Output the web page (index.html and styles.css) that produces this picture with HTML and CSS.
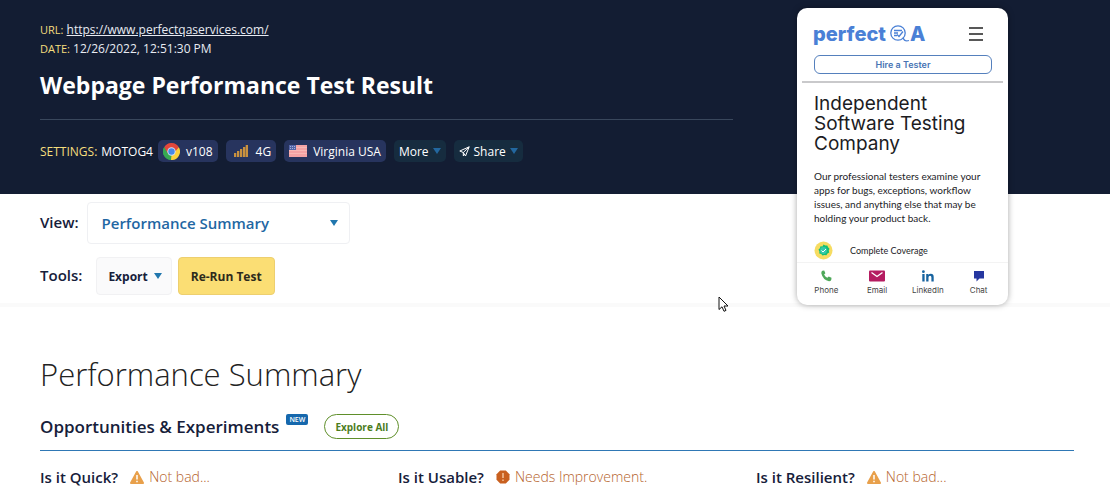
FILE: index.html
```html
<!DOCTYPE html>
<html lang="en">
<head>
<meta charset="utf-8">
<title>Webpage Performance Test Result</title>
<link rel="stylesheet" href="styles.css">
</head>
<body>
<header class="hero">
  <div class="hero-main">
    <p class="meta"><span class="label">URL:</span> <a href="#">https://www.perfectqaservices.com/</a></p>
    <p class="meta"><span class="label">DATE:</span> 12/26/2022, 12:51:30 PM</p>
    <h1>Webpage Performance Test Result</h1>
    <div class="settings">
      <span class="device"><span class="label">SETTINGS:</span> MOTOG4</span>
      <span class="chip"><svg width="17" height="17" viewBox="0 0 18 18" aria-hidden="true"><path d="M9 9L1.2 4.5A9 9 0 0 1 16.8 4.5Z" fill="#e2473c"/><path d="M9 9L1.2 4.5A9 9 0 0 0 9 18Z" fill="#36a852"/><path d="M9 9L16.8 4.5A9 9 0 0 1 8.5 18Z" fill="#fbd03a"/><path d="M9 4.5H16.8L13 9ZM5 11L1.2 4.5L7 6Z" fill="#e2473c"/><path d="M1.2 4.5L5.1 11.2L9 13L7.6 17.9A9 9 0 0 1 1.2 4.5Z" fill="#36a852"/><circle cx="9" cy="9" r="4.4" fill="#d5e3f5"/><circle cx="9" cy="9" r="3.4" fill="#4688e8"/></svg>v108</span>
      <span class="chip signal"><svg width="14" height="12" viewBox="0 0 14 12" fill="#c9913f" aria-hidden="true"><path d="M0 8h2.300v4H0zM3 6h2.300v6H3zM6 4h2.300v8H6zM9 2h2.300v10H9zM11.700 0H14v12h-2.300z"/></svg>4G</span>
      <span class="chip"><svg width="18" height="12" viewBox="0 0 18 12" aria-hidden="true"><path fill="#f4a3a5" d="M0 0h18v12H0z"/><path fill="#f8b8b5" d="M0 2h18v1H0zM0 5h18v1H0zM0 8h18v1H0z"/><path fill="#5465a8" d="M0 0h7v5H0z"/><path stroke="#a6b2da" stroke-dasharray="1 1" d="M1 1.5h5M1 3.5h5"/></svg>Virginia USA</span>
      <button class="menu" type="button">More <i class="caret"></i></button>
      <button class="menu" type="button"><svg width="11" height="11" viewBox="0 0 11 11" fill="none" stroke="#fff" stroke-linejoin="round" aria-hidden="true"><path d="M10.2.8L.8 5l3.500 1.500L6.500 10ZM4.300 6.500L10.200.8M4.300 6.500v3.300l1.300-1.600"/></svg>Share <i class="caret"></i></button>
    </div>
  </div>

  <aside class="phone">
    <div class="phone-top">
      <div class="brand">perfect <svg width="20" height="18" viewBox="0 0 20 18" fill="none" stroke="#4a80d6" stroke-width="1.3" aria-hidden="true"><circle cx="8" cy="8" r="7.2"/><path d="M4 5.5h8M4 8h4M4 10.500h3M7 9.500l2 2 4-5M13 12.500c1 3 3 4 6 3"/></svg><span>A</span></div>
      <button class="burger" type="button" aria-label="Menu"><svg width="14" height="14" viewBox="0 0 14 14" stroke="#222" stroke-width="1.4"><path d="M0 1h14M0 7h14M0 13h14"/></svg></button>
    </div>
    <button class="hire" type="button">Hire a Tester</button>
    <div class="phone-body">
      <h2>Independent Software Testing Company</h2>
      <p>Our professional testers examine your apps for bugs, exceptions, workflow issues, and anything else that may be holding your product back.</p>
      <div class="coverage"><svg width="19" height="19" viewBox="0 0 19 19" aria-hidden="true"><circle cx="9.500" cy="9.500" r="9" fill="#f6dc62"/><path d="M9.500 3.500l1.800 1 2-.1.800 1.900 1.400 1.400-.7 1.900.4 2-1.700 1-1.100 1.600-2-.3-1.900.7-1.300-1.500-1.900-.7.1-2-.9-1.800 1.400-1.400.6-1.900 2 .1z" fill="#12bf78"/><circle cx="9.500" cy="9.500" r="3.400" fill="#36c9aa"/><path d="M7.500 9.500l1.500 1.500 3-3" fill="none" stroke="#fff"/></svg>Complete Coverage</div>
    </div>
    <nav class="phone-nav">
      <a href="#"><svg width="12" height="12" viewBox="0 0 12 12" aria-hidden="true"><path d="M2.300.7L4.200.5l1.200 2.800-1.300 1.300q1 2.200 3.200 3.100l1.400-1.200 2.800 1.300-.2 1.900q-.5 1.500-2.300 1.500Q3 10.300 1.300 3.300q-.1-1.900 1-2.600z" fill="#4fa85a"/></svg>Phone</a>
      <a href="#"><svg width="16" height="12" viewBox="0 0 16 12" aria-hidden="true"><rect y=".5" width="16" height="11" rx="1" fill="#b51c61"/><path d="M2.500 2.500L8 6.500l5.500-4" fill="none" stroke="#fff" stroke-width="1.300"/></svg>Email</a>
      <a href="#"><svg width="12" height="12" viewBox="0 0 12 12" fill="#17639f" aria-hidden="true"><circle cx="1.400" cy="1.700" r="1.400"/><path d="M.3 4h2.300v7.500H.3zM4.200 4h2.200v1q.7-1.200 2.400-1.200 2.900 0 2.900 3.300v4.400H9.400v-4q0-1.700-1.300-1.700-1.600 0-1.600 1.800v3.900H4.200z"/></svg>LinkedIn</a>
      <a href="#"><svg width="12" height="12" viewBox="0 0 12 12" aria-hidden="true"><path d="M1 1h10v7.500H6.500L3.500 11.500v-3H1z" fill="#2637a0"/></svg>Chat</a>
    </nav>
  </aside>
</header>

<section class="toolbar">
  <div class="row">
    <label for="view">View:</label>
    <span class="select-box"><select id="view"><option>Performance Summary</option></select><i class="caret"></i></span>
  </div>
  <div class="row tools">
    <span class="tools-label">Tools:</span>
    <button class="export" type="button">Export <i class="caret"></i></button>
    <button class="rerun" type="button">Re-Run Test</button>
  </div>
</section>

<main class="summary">
  <h2 class="title">Performance Summary</h2>
  <div class="opps">
    <h3>Opportunities &amp; Experiments</h3>
    <span class="new">NEW</span>
    <button class="explore" type="button">Explore All</button>
  </div>
  <div class="cards">
    <div class="card"><h4>Is it Quick?</h4><svg width="14" height="13" viewBox="0 0 14 13" aria-hidden="true"><path d="M7 1l6 11H1z" fill="#e8a04b" stroke="#e8a04b" stroke-width="2" stroke-linejoin="round"/><path d="M7 4v4.500M7 9.800v1.500" stroke="#fff" stroke-width="1.500"/></svg><span>Not bad...</span></div>
    <div class="card"><h4>Is it Usable?</h4><svg width="14" height="14" viewBox="0 0 14 14" aria-hidden="true"><path d="M4.200.5h5.600l3.700 3.700v5.600l-3.700 3.700H4.200L.5 9.800V4.200z" fill="#c9601f"/><path d="M7 3v5M7 9.500V11" stroke="#f3c49c" stroke-width="1.500"/></svg><span>Needs Improvement.</span></div>
    <div class="card"><h4>Is it Resilient?</h4><svg width="14" height="13" viewBox="0 0 14 13" aria-hidden="true"><path d="M7 1l6 11H1z" fill="#e8a04b" stroke="#e8a04b" stroke-width="2" stroke-linejoin="round"/><path d="M7 4v4.500M7 9.800v1.500" stroke="#fff" stroke-width="1.500"/></svg><span>Not bad...</span></div>
  </div>
</main>
<svg class="cursor" width="11" height="17" viewBox="0 0 11 17" aria-hidden="true"><path d="M1 1v12.500l3-2.700 2 4.500 2-.9-2-4.400h4z" fill="#fff" stroke="#111" stroke-linejoin="round"/></svg>
</body>
</html>
```
FILE: styles.css
```css
* { box-sizing: border-box; }

body {
  margin: 0;
  background: #fff;
  color: #16203a;
  font-family: "Open Sans", sans-serif;
  font-size: 12px;
  overflow: hidden;
}

h1, h2, h3, h4, p { margin: 0; }
button, select { font-family: inherit; cursor: pointer; }
svg { flex: none; }

.caret {
  border: 4px solid transparent;
  border-top: 6px solid #2177ae;
  border-bottom: 0;
}

.hero {
  position: relative;
  padding: 20px 40px 32px;
  background: #131d33;
  color: #fff;
}
.hero-main { margin-right: 337px; }
.meta { line-height: 19px; color: #e8ebf2; }
.meta a { color: #e8ebf2; }
.label { color: #f5de7d; font-size: 11px; }
.hero h1 {
  padding: 10px 0 17px;
  border-bottom: 1px solid #39475c;
  font-size: 23px;
  line-height: 34px;
}
.settings {
  display: flex;
  align-items: center;
  gap: 8px;
  margin-top: 20px;
}
.device {
  display: flex;
  align-items: center;
  gap: 4px;
  margin-right: -3px;
}
.device .label { font-size: 12px; }
.chip, .menu {
  display: flex;
  align-items: center;
  gap: 6px;
  height: 22px;
  padding: 0 5px;
  border: 0;
  border-radius: 5px;
  background: #27345e;
  color: #fff;
  font-size: 12px;
}
.signal {
  gap: 8px;
  padding-left: 8px;
}
.menu {
  gap: 4px;
  background: #162c3f;
}
.menu .caret { border-top-color: #23679f; }

.phone {
  position: absolute;
  top: 8px;
  right: 102px;
  width: 211px;
  padding-top: 14px;
  border-radius: 10px;
  background: #fff;
  box-shadow: 0 0 6px rgba(0, 0, 0, .35);
  color: #1c1c1f;
}
.phone-top {
  display: flex;
  align-items: center;
  justify-content: space-between;
  height: 24px;
  padding: 0 25px 0 16px;
}
.brand {
  display: flex;
  align-items: center;
  color: #4a80d6;
  font: 800 20px/24px Inter, sans-serif;
}
.brand svg { margin-left: 4px; }
.burger {
  display: flex;
  padding: 0;
  border: 0;
  background: none;
}
.hire {
  display: block;
  width: 178px;
  height: 19px;
  margin: 9px 17px 7px;
  padding: 0;
  border: 1px solid #5580bd;
  border-radius: 6px;
  background: #fff;
  color: #4874b4;
  font: 600 9px Inter, sans-serif;
}
.phone-body {
  margin: 0 5px;
  padding: 11px 12px 2px;
  border-top: 2px solid #c9c9cb;
}
.phone h2 { font: 400 19px/20px Inter, sans-serif; }
.phone-body p {
  margin-top: 15px;
  font: 400 10px/14px Lato, sans-serif;
}
.coverage {
  display: flex;
  align-items: center;
  gap: 17px;
  margin-top: 16px;
  font: 400 9px Lato, sans-serif;
}
.phone-nav {
  display: grid;
  grid-template-columns: repeat(4, 1fr);
  padding: 7px 4px 9px;
  border-top: 1px solid #f3f3f3;
}
.phone-nav a {
  display: flex;
  flex-direction: column;
  align-items: center;
  gap: 2px;
  color: #444;
  font: 400 8px/12px Inter, sans-serif;
  text-decoration: none;
}

.toolbar {
  padding: 8px 40px;
  border-bottom: 4px solid #fafafa;
}
.row {
  display: flex;
  align-items: center;
  gap: 8px;
}
.row label, .tools-label {
  padding-bottom: 2px;
  font-size: 15px;
  font-weight: 600;
}
.select-box {
  display: grid;
  grid-template-columns: 1fr auto;
  align-items: center;
  width: 263px;
}
.select-box select {
  grid-area: 1 / 1 / 2 / 3;
  height: 42px;
  padding: 0 14px;
  border: 1px solid #eff0f3;
  border-radius: 4px;
  background: #fff;
  appearance: none;
  color: #1f67a3;
  font-size: 15px;
  font-weight: 600;
}
.select-box .caret {
  grid-area: 1 / 2;
  margin-right: 12px;
  pointer-events: none;
}
.tools { margin-top: 13px; gap: 6px; }
.tools-label { margin-right: 8px; }
.export, .rerun {
  display: flex;
  align-items: center;
  gap: 6px;
  height: 38px;
  padding: 0 12px;
  border: 1px solid #f1f1f3;
  border-radius: 4px;
  background: #fafafb;
  color: #16203a;
  font-size: 12px;
  font-weight: 700;
}
.export { padding: 0 9px 0 11px; }
.rerun {
  border-color: #edcf6f;
  background: #fbde74;
  color: #2e2a1c;
}

.summary { padding: 43px 36px 12px 40px; }
.title {
  color: #222;
  font-size: 31px;
  font-weight: 300;
  line-height: 48px;
}
.opps {
  display: flex;
  align-items: center;
  padding: 16px 0 11px;
  border-bottom: 1px solid #2f78b5;
}
.opps h3 { font-size: 17px; font-weight: 600; line-height: 24px; }
.new {
  align-self: flex-start;
  margin-left: 7px;
  padding: 0 3px;
  border-radius: 2px;
  background: #1668ad;
  color: #fff;
  font-size: 7px;
  font-weight: 600;
  line-height: 11px;
}
.explore {
  height: 25px;
  margin-left: 16px;
  padding: 0 10px;
  border: 1px solid #5f8f2a;
  border-radius: 13px;
  background: #fff;
  color: #4c7d1e;
  font-size: 10px;
  font-weight: 700;
}
.cards {
  display: grid;
  grid-template-columns: repeat(3, 1fr);
  gap: 40px;
  margin-top: 15px;
}
.card {
  display: flex;
  align-items: center;
  color: #b5632c;
  font-size: 14px;
  font-weight: 300;
  line-height: 22px;
  white-space: nowrap;
}
.card h4 {
  margin-right: 12px;
  color: #16203a;
  font-size: 15px;
  font-weight: 600;
}
.card span { margin-left: 5px; }

.cursor {
  position: absolute;
  top: 296px;
  left: 718px;
}
```
